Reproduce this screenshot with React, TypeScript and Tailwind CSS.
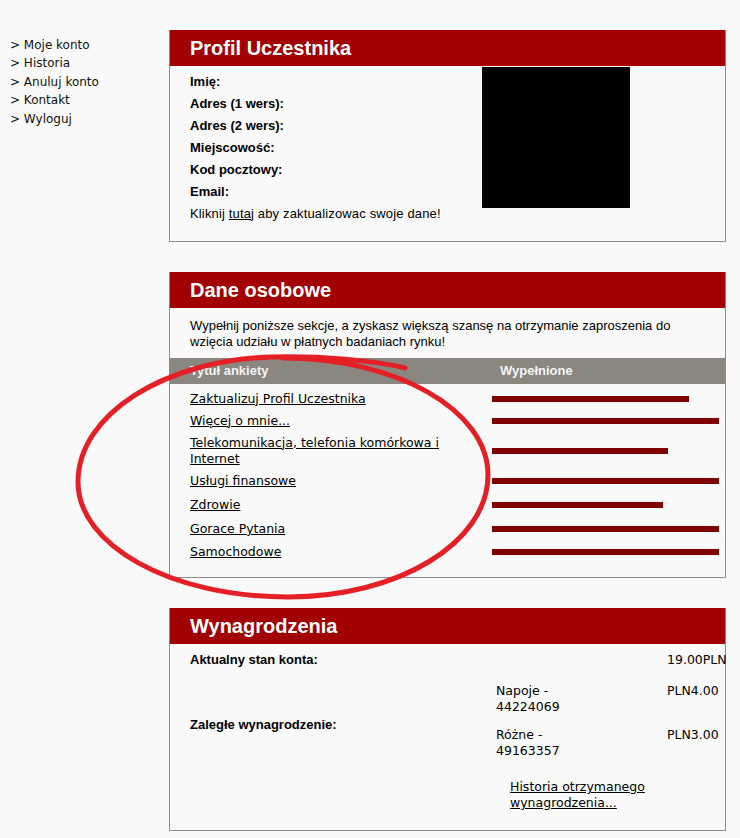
import React from "react";

const verdana = { fontFamily: '"DejaVu Sans", Verdana, sans-serif' };

function Header({ title }: { title: string }) {
  return (
    <div className="h-[36px] bg-[#a20000] flex items-center pl-[20px] text-white font-bold text-[20px] leading-none">
      {title}
    </div>
  );
}

const rows: { label: React.ReactNode; h: string; bar: number }[] = [
  { label: "Zaktualizuj Profil Uczestnika", h: "h-[22px]", bar: 197 },
  { label: "Więcej o mnie...", h: "h-[22px]", bar: 227 },
  { label: "Telekomunikacja, telefonia komórkowa i Internet", h: "h-[38px]", bar: 176 },
  { label: "Usługi finansowe", h: "h-[23px]", bar: 227 },
  { label: "Zdrowie", h: "h-[24px]", bar: 171 },
  { label: "Gorace Pytania", h: "h-[24px]", bar: 227 },
  { label: "Samochodowe", h: "h-[22px]", bar: 227 },
];

export default function App() {
  return (
    <div
      className="relative w-[740px] h-[838px] bg-[#f9f9f9] text-black overflow-hidden"
      style={{ fontFamily: '"Liberation Sans", Arial, sans-serif' }}
    >
      <div className="flex">
        {/* Left nav */}
        <div className="w-[169px] shrink-0 pl-[10px] pt-[35.5px] text-[12px] leading-[18.5px] text-[#111]" style={verdana}>
          <div>&gt; Moje konto</div>
          <div>&gt; Historia</div>
          <div>&gt; Anuluj konto</div>
          <div>&gt; Kontakt</div>
          <div>&gt; Wyloguj</div>
        </div>

        {/* Main column */}
        <div className="w-[557px] shrink-0 pt-[30px] flex flex-col gap-[30px]">
          {/* Profil Uczestnika */}
          <div className="h-[212px] border-x border-b border-[#8c8c8c] flex flex-col">
            <Header title="Profil Uczestnika" />
            <div className="flex pl-[20px] pt-[1px]">
              <div className="w-[292px] shrink-0 pt-[3.5px] text-[13px] leading-[22px]">
                <div className="font-bold">Imię:</div>
                <div className="font-bold">Adres (1 wers):</div>
                <div className="font-bold">Adres (2 wers):</div>
                <div className="font-bold">Miejscowość:</div>
                <div className="font-bold">Kod pocztowy:</div>
                <div className="font-bold">Email:</div>
                <div className="tracking-[0.15px]">
                  Kliknij <span className="underline">tutaj</span> aby zaktualizowac swoje dane!
                </div>
              </div>
              <div className="w-[148px] h-[141px] shrink-0 bg-black" />
            </div>
          </div>

          {/* Dane osobowe */}
          <div className="h-[306px] border-x border-b border-[#8c8c8c] flex flex-col">
            <Header title="Dane osobowe" />
            <div className="pl-[20px] pr-[10px] pt-[10px] pb-[8px] text-[13px] leading-[16px]">
              Wypełnij poniższe sekcje, a zyskasz większą szansę na otrzymanie zaproszenia do wzięcia udziału w płatnych badaniach rynku!
            </div>
            <div className="h-[26px] bg-[#8a8680] flex items-center text-[13px] font-bold text-[#f4f4f4]">
              <div className="w-[330px] shrink-0 pl-[20px]">Tytuł ankiety</div>
              <div>Wypełnione</div>
            </div>
            <div className="pt-[3.5px]">
              {rows.map((r, i) => (
                <div key={i} className={`${r.h} flex items-center`}>
                  <div className="w-[302px] shrink-0 pl-[20px] text-[12.5px] leading-[16px] underline" style={verdana}>
                    {r.label}
                  </div>
                  <div className="ml-[20px] h-[6px] shrink-0 bg-[#800000]" style={{ width: r.bar }} />
                </div>
              ))}
            </div>
          </div>

          {/* Wynagrodzenia */}
          <div className="h-[223px] border-x border-b border-[#8c8c8c] flex flex-col">
            <Header title="Wynagrodzenia" />
            <div className="pt-[8px] text-[12.5px] leading-[16px]">
              <div className="flex">
                <div className="w-[326px] shrink-0 pl-[20px] font-bold text-[13px]">Aktualny stan konta:</div>
                <div className="w-[171px] shrink-0" />
                <div className="whitespace-nowrap shrink-0" style={verdana}>19.00PLN</div>
              </div>
              <div className="flex items-center mt-[15px]">
                <div className="w-[326px] shrink-0 pl-[20px] font-bold text-[13px] pt-[7px]">Zaległe wynagrodzenie:</div>
                <div className="flex flex-col gap-[12px]" style={verdana}>
                  <div className="flex">
                    <div className="w-[171px] shrink-0">
                      <div className="w-[90px]">Napoje - 44224069</div>
                    </div>
                    <div>PLN4.00</div>
                  </div>
                  <div className="flex">
                    <div className="w-[171px] shrink-0">
                      <div className="w-[90px]">Różne - 49163357</div>
                    </div>
                    <div>PLN3.00</div>
                  </div>
                </div>
              </div>
              <div className="pl-[340px] mt-[20px]" style={verdana}>
                <div className="w-[160px] underline">Historia otrzymanego wynagrodzenia...</div>
              </div>
            </div>
          </div>
        </div>
      </div>

      {/* Hand-drawn red ellipse */}
      <svg className="absolute left-0 top-0 pointer-events-none" width="740" height="838" viewBox="0 0 740 838">
        <path
          d="M 283 358 C 396 358 488 410 488 475 C 488 543 398 597 288 597 C 170 597 78 545 78 482 C 78 414 165 360 272 357 C 322 356 372 360 405 368"
          fill="none"
          stroke="#e41f26"
          strokeWidth="5"
          strokeLinecap="round"
        />
      </svg>
    </div>
  );
}
